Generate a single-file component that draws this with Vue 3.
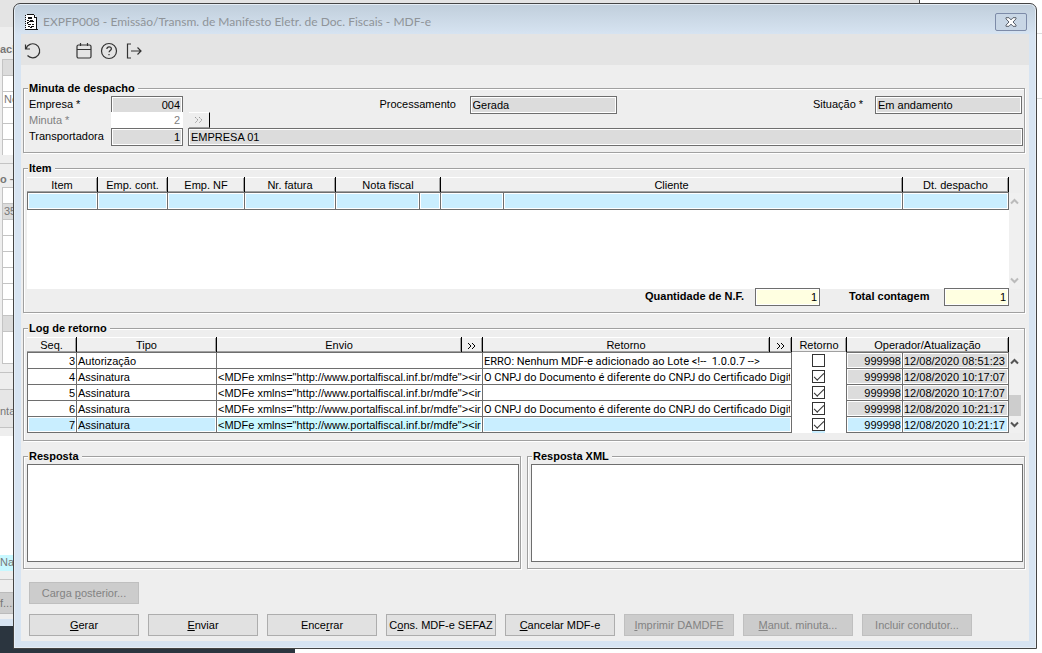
<template>
  <div class="desktop">
    <div class="back-window" aria-hidden="true">
      <div class="back-toolbar"></div>
      <div class="back-title">ach</div>
      <div v-for="(row, i) in backRows" :key="i" class="back-row" :class="row.type">{{ row.text }}</div>
    </div>
    <div class="taskbar"></div>
    <div class="side-lines" aria-hidden="true"></div>

    <section class="dialog" role="dialog" aria-labelledby="dialog-title">
      <header class="titlebar">
        <svg class="doc-icon" width="13" height="17" viewBox="0 0 13 17" shape-rendering="crispEdges">
          <path d="M1 1h8l3 3v12H1z" fill="#fff" />
          <path d="M0 1h1v1H0zM0 3h1v1H0zM0 5h1v1H0zM0 7h1v1H0zM0 9h1v1H0zM0 11h1v1H0zM0 13h1v1H0zM0 15h13v1H0zM11 4h1v12h-1zM2 0h7v1H2zM9 1h1v3H9zM10 3h2v1h-2z" fill="#111" />
          <path d="M3 3h4v2H3zM2 6h2v1H2zM5 6h3v1H5zM4 7h5v1H4zM2 8h2v1H2zM3 10h3v1H3zM7 10h2v1H7zM3 12h2v1H3zM6 12h3v1H6zM2 9h1v1H2zM5 13h2v1H5z" fill="#111" />
        </svg>
        <h1 id="dialog-title">EXPFP008 - Emissão/Transm. de Manifesto Eletr. de Doc. Fiscais - MDF-e</h1>
        <button type="button" class="close" aria-label="Fechar">
          <svg width="12" height="10" viewBox="0 0 12 10">
            <path d="M1 .7h3l2 2.2 2-2.2h3v1.2L8 5l3 3.1v1.2H8L6 7.1 4 9.3H1V8.1L4 5 1 1.9z" fill="#fff" stroke="#59606b" />
          </svg>
        </button>
      </header>

      <nav class="toolbar">
        <button type="button" class="tool undo" aria-label="Desfazer">
          <svg width="18" height="18" viewBox="0 0 18 18">
            <path d="M1.500 2.500v4.500h4.500M2 6.700A7 7 0 1 1 3.500 13.500" />
          </svg>
        </button>
        <button type="button" class="tool" aria-label="Calendário">
          <svg width="18" height="18" viewBox="0 0 18 18">
            <rect x="2" y="3" width="14" height="13" rx="1.5" />
            <path d="M2 7.5h14M5.5 1v3M12.5 1v3" />
          </svg>
        </button>
        <button type="button" class="tool" aria-label="Ajuda">
          <svg width="18" height="18" viewBox="0 0 18 18">
            <circle cx="9" cy="9" r="7.5" />
            <path d="M6.8 7c.2-1.5 1.1-2.2 2.3-2.2 1.3 0 2.3.8 2.3 2 0 1.7-2.3 1.8-2.3 3.5M9 12v1.3" />
          </svg>
        </button>
        <button type="button" class="tool" aria-label="Sair">
          <svg width="18" height="18" viewBox="0 0 18 18">
            <path d="M6 2H2.5v14H6M6 9h10M12.5 5.5L16 9l-3.5 3.5" />
          </svg>
        </button>
      </nav>

      <main class="content">
        <fieldset class="group">
          <legend>Minuta de despacho</legend>
          <div class="minuta">
            <div class="line spread">
              <div class="pair">
                <label for="empresa" class="lead">Empresa *</label>
                <input id="empresa" class="field short num" value="004" readonly />
              </div>
              <div class="pair">
                <label for="processamento" class="mid">Processamento</label>
                <input id="processamento" class="field medium" value="Gerada" readonly />
              </div>
              <div class="pair">
                <label for="situacao" class="end">Situação *</label>
                <input id="situacao" class="field medium" value="Em andamento" readonly />
              </div>
            </div>
            <div class="line muted">
              <label for="minuta" class="lead">Minuta *</label>
              <input id="minuta" class="plain short num" value="2" disabled />
              <button type="button" class="lookup" aria-label="Buscar minuta" disabled>
                <svg width="10" height="8" viewBox="0 0 10 8">
                  <path d="M1 1l3 3-3 3M5 1l3 3-3 3" stroke-dasharray="2 1" />
                </svg>
              </button>
            </div>
            <div class="line">
              <label for="transportadora" class="lead">Transportadora</label>
              <input id="transportadora" class="field short num" value="1" readonly />
              <input class="field wide" aria-label="Nome da transportadora" value="EMPRESA 01" readonly />
            </div>
          </div>
        </fieldset>

        <fieldset class="group">
          <legend>Item</legend>
          <div class="list items">
            <table>
              <colgroup>
                <col class="w71" /><col class="w70" /><col class="w77" /><col class="w91" />
                <col class="w84" /><col class="w21" /><col class="w63" /><col /><col class="w106" />
              </colgroup>
              <thead>
                <tr>
                  <th>Item</th>
                  <th>Emp. cont.</th>
                  <th>Emp. NF</th>
                  <th>Nr. fatura</th>
                  <th colspan="2">Nota fiscal</th>
                  <th colspan="2">Cliente</th>
                  <th>Dt. despacho</th>
                </tr>
              </thead>
              <tbody>
                <tr class="selected">
                  <td v-for="n in 9" :key="n"></td>
                </tr>
              </tbody>
            </table>
            <div class="scroll faded">
              <button type="button" aria-label="Rolar para cima">
                <svg width="9" height="7" viewBox="0 0 9 7"><path d="M1 5.5L4.5 2 8 5.5" /></svg>
              </button>
              <button type="button" aria-label="Rolar para baixo">
                <svg width="9" height="7" viewBox="0 0 9 7"><path d="M1 1.5L4.5 5 8 1.5" /></svg>
              </button>
            </div>
          </div>
          <div class="totals">
            <label for="qtd" class="first">Quantidade de N.F.</label>
            <input id="qtd" class="field total num" value="1" readonly />
            <label for="contagem" class="second">Total contagem</label>
            <input id="contagem" class="field total num" value="1" readonly />
          </div>
        </fieldset>

        <fieldset class="group">
          <legend>Log de retorno</legend>
          <div class="list log">
            <table>
              <colgroup>
                <col class="w50" /><col class="w140" /><col class="w245" /><col class="w21" />
                <col /><col class="w22" /><col class="w55" /><col class="w56" /><col class="w106" />
              </colgroup>
              <thead>
                <tr>
                  <th>Seq.</th>
                  <th>Tipo</th>
                  <th>Envio</th>
                  <th>
                    <button type="button" class="expand" aria-label="Ver envio">
                      <svg width="10" height="8" viewBox="0 0 10 8"><path d="M1 1l3 3-3 3M5 1l3 3-3 3" /></svg>
                    </button>
                  </th>
                  <th>Retorno</th>
                  <th>
                    <button type="button" class="expand" aria-label="Ver retorno">
                      <svg width="10" height="8" viewBox="0 0 10 8"><path d="M1 1l3 3-3 3M5 1l3 3-3 3" /></svg>
                    </button>
                  </th>
                  <th>Retorno</th>
                  <th colspan="2">Operador/Atualização</th>
                </tr>
              </thead>
              <tbody>
                <tr v-for="row in logs" :key="row.seq" :class="{ selected: row.seq === 7 }">
                  <td class="num">{{ row.seq }}</td>
                  <td>{{ row.tipo }}</td>
                  <td colspan="2" class="envio"><div class="clip">{{ row.envio }}</div></td>
                  <td colspan="2" class="retorno"><div class="clip">{{ row.retorno }}</div></td>
                  <td class="check">
                    <input v-model="row.ok" type="checkbox" :aria-label="'Retorno ' + row.seq" />
                  </td>
                  <td class="num locked">999998</td>
                  <td class="locked">{{ row.data }}</td>
                </tr>
              </tbody>
            </table>
            <div class="scroll">
              <button type="button" aria-label="Rolar para cima">
                <svg width="9" height="7" viewBox="0 0 9 7"><path d="M1 5.5L4.5 2 8 5.5" /></svg>
              </button>
              <div class="thumb"></div>
              <button type="button" aria-label="Rolar para baixo">
                <svg width="9" height="7" viewBox="0 0 9 7"><path d="M1 1.5L4.5 5 8 1.5" /></svg>
              </button>
            </div>
          </div>
        </fieldset>

        <div class="responses">
          <fieldset class="group">
            <legend id="resp">Resposta</legend>
            <div class="response"><textarea aria-labelledby="resp"></textarea></div>
          </fieldset>
          <fieldset class="group">
            <legend id="resp-xml">Resposta XML</legend>
            <div class="response"><textarea aria-labelledby="resp-xml"></textarea></div>
          </fieldset>
        </div>

        <footer class="actions">
          <div class="action-row">
            <button type="button" class="action" disabled>Carga <u>p</u>osterior...</button>
          </div>
          <div class="action-row">
            <button v-for="a in actions" :key="a.key + a.after" type="button" class="action" :disabled="a.disabled">{{ a.before }}<u>{{ a.key }}</u>{{ a.after }}</button>
          </div>
        </footer>
      </main>
    </section>
  </div>
</template>

<script setup>
import { ref } from 'vue'

const xml = '<MDFe xmlns="http://www.portalfiscal.inf.br/mdfe"><ir'
const cnpj = 'O CNPJ do Documento é diferente do CNPJ do Certificado Digita'

const logs = ref([
  { seq: 3, tipo: 'Autorização', envio: '', retorno: 'ERRO: Nenhum MDF-e adicionado ao Lote <!--\u00a0 1.0.0.7 -->', ok: false, data: '12/08/2020 08:51:23' },
  { seq: 4, tipo: 'Assinatura', envio: xml, retorno: cnpj, ok: true, data: '12/08/2020 10:17:07' },
  { seq: 5, tipo: 'Assinatura', envio: xml, retorno: '', ok: true, data: '12/08/2020 10:17:07' },
  { seq: 6, tipo: 'Assinatura', envio: xml, retorno: cnpj, ok: true, data: '12/08/2020 10:21:17' },
  { seq: 7, tipo: 'Assinatura', envio: xml, retorno: '', ok: true, data: '12/08/2020 10:21:17' }
])

const actions = [
  { before: '', key: 'G', after: 'erar' },
  { before: '', key: 'E', after: 'nviar' },
  { before: 'Ence', key: 'r', after: 'rar' },
  { before: 'C', key: 'o', after: 'ns. MDF-e SEFAZ' },
  { before: '', key: 'C', after: 'ancelar MDF-e' },
  { before: '', key: 'I', after: 'mprimir DAMDFE', disabled: true },
  { before: '', key: 'M', after: 'anut. minuta...', disabled: true },
  { before: 'Incluir condutor...', key: '', after: '', disabled: true }
]

const backRows = [
  { type: 'cell gray' },
  { type: 'cell' },
  { type: 'cell', text: 'Ne' },
  { type: 'cell' },
  { type: 'cell' },
  { type: 'cell' },
  { type: 'rule' },
  { type: 'caption', text: 'o –' },
  { type: 'cell' },
  { type: 'cell gray', text: '35' },
  { type: 'cell' },
  { type: 'cell' },
  { type: 'cell' },
  { type: 'cell' },
  { type: 'cell' },
  { type: 'cell' },
  { type: 'cell gray' },
  { type: 'cell tall' },
  { type: 'rule' },
  { type: 'tab', text: 'nta' },
  { type: 'rule' },
  { type: 'area' },
  { type: 'active', text: 'Na' },
  { type: 'rule' },
  { type: 'push', text: 'f....' }
]
</script>

<style>
body {
  margin: 0;
}
</style>

<style scoped>
.desktop {
  position: relative;
  height: 100vh;
  overflow: hidden;
  background: #fff;
  color: #000;
  font: 11px/15px "Liberation Sans", Arial, sans-serif;
}

.desktop * {
  box-sizing: border-box;
}

button,
input,
textarea {
  margin: 0;
  padding: 0;
  font: inherit;
  color: inherit;
}

svg {
  display: block;
  fill: none;
  stroke: #333;
}

/* window left open behind the dialog */
.back-window {
  position: absolute;
  top: 0;
  left: 0;
  width: 920px;
  height: 626px;
  overflow: hidden;
  background: #eee;
  border-right: 1px solid #444;
  border-bottom: 7px solid #d7e4f2;
  color: #777;
}

.back-toolbar {
  height: 27px;
  background: #e4e4e4;
}

.back-title {
  height: 32px;
  padding-top: 15px;
  font-weight: bold;
}

.back-row {
  height: 16px;
}

.cell {
  margin-left: 2px;
  padding-left: 1px;
  background: #fff;
  border: 1px solid #c4c4c4;
  border-bottom: 0;
}

.gray {
  background: #dcdcdc;
}

.tall {
  height: 33px;
  border-bottom: 1px solid #c4c4c4;
}

.rule {
  border-top: 1px solid #c4c4c4;
  margin-top: 8px;
  height: 9px;
}

.caption {
  font-weight: bold;
  margin-bottom: -1px;
}

.tab {
  height: 38px;
  margin-top: 8px;
  padding-top: 14px;
  background: #e6e6e6;
  border-top: 1px solid #c4c4c4;
}

.tab + .rule {
  margin-top: 0;
}

.area {
  height: 119px;
  background: #fff;
}

.active {
  background: #c8f8ff;
}

.push {
  height: 22px;
  margin-top: 4px;
  padding-top: 3px;
  background: #ccc;
  border: 1px solid #bbb;
  border-left: 0;
}

.taskbar {
  position: absolute;
  left: 0;
  bottom: 0;
  width: 295px;
  height: 27px;
  background: #2b353f;
}

.side-lines {
  position: absolute;
  top: 33px;
  right: 0;
  width: 5px;
  height: 66px;
  border: 1px solid #ddd;
  border-width: 1px 0;
}

.dialog {
  position: absolute;
  inset: 3px 5px 4px 13px;
  display: flex;
  flex-direction: column;
  padding: 0 7px 7px;
  background: linear-gradient(#c0cedb, #d7e4f2 31px);
  border: 1px solid #444;
  border-radius: 7px 7px 0 0;
  box-shadow: inset 0 0 0 1px #e6eef6;
}

.titlebar {
  display: flex;
  flex: none;
  align-items: center;
  height: 30px;
  padding: 6px 2px 0 4px;
}

.doc-icon {
  margin-right: 5px;
  stroke: none;
}

h1 {
  flex: 1;
  margin: 0;
  color: #8f9499;
  font: 12px/16px Lato, sans-serif;
}

.close {
  display: flex;
  align-items: center;
  justify-content: center;
  width: 32px;
  height: 18px;
  background: #c8d6e5;
  border: 1px solid #7d8ba8;
  border-radius: 2px;
}

.toolbar {
  display: flex;
  flex: none;
  align-items: center;
  gap: 7px;
  height: 31px;
  padding: 3px 3px 0;
  background: #e4e4e4;
}

.tool {
  background: none;
  border: 0;
}

.undo {
  margin-right: 26px;
}

.tool svg {
  stroke-width: 1.2;
}

.content {
  flex: 1;
  padding: 16px 4px 5px 2px;
  background: #eee;
}

.group {
  min-width: 0;
  margin: 0 0 8px;
  padding: 0;
  border: 1px solid #a0a0a0;
  box-shadow: 1px 1px 0 #fff, inset 1px 1px 0 #fff;
}

legend {
  margin-left: 4px;
  padding: 0 3px 0 1px;
  background: #eee;
  font-weight: bold;
}

.minuta {
  padding: 0 1px 8px 5px;
}

.line {
  display: flex;
  align-items: flex-start;
  height: 16px;
}

.spread {
  justify-content: space-between;
  padding-right: 1px;
}

.pair {
  display: flex;
}

.line label {
  flex: none;
  line-height: 16px;
}

.lead {
  width: 82px;
}

.mid {
  width: 90px;
}

.end {
  width: 62px;
}

.muted {
  color: #808080;
}

.field {
  height: 18px;
  padding: 0 2px;
  background: #dcdcdc;
  border: 1px solid #6e6e6e;
  border-radius: 0;
  box-shadow: inset 0 0 0 1px #fff;
}

.plain {
  position: relative;
  height: 16px;
  padding: 0 3px;
  background: #fff;
  border: 0;
}

.short {
  width: 72px;
}

.medium {
  width: 147px;
}

.wide {
  flex: 1;
  margin-left: 5px;
}

.num {
  text-align: right;
}

.lookup {
  display: flex;
  align-items: center;
  justify-content: center;
  width: 21px;
  height: 16px;
  margin-left: 6px;
  background: #eee;
  border: solid;
  border-width: 1px 1px 1px 0;
  border-color: #fff #000 #a0a0a0 #fff;
}

.lookup svg {
  stroke: #999;
}

.list {
  display: flex;
  padding: 1px 2px 0 3px;
}

.items {
  height: 113px;
  background: linear-gradient(#fff, #fff) 3px 16px / calc(100% - 18px) 97px no-repeat;
}

.log {
  padding-bottom: 7px;
}

table {
  flex: 1;
  width: 100%;
  align-self: flex-start;
  table-layout: fixed;
  border-spacing: 0;
}

.w21 { width: 21px; }
.w22 { width: 22px; }
.w50 { width: 50px; }
.w55 { width: 55px; }
.w56 { width: 56px; }
.w63 { width: 63px; }
.w70 { width: 70px; }
.w71 { width: 71px; }
.w77 { width: 77px; }
.w84 { width: 84px; }
.w91 { width: 91px; }
.w106 { width: 106px; }
.w140 { width: 140px; }
.w245 { width: 245px; }

th {
  height: 15px;
  padding: 2px 0 0;
  background: #efefef;
  border-right: 1px solid #000;
  box-shadow: inset 0 1px 0 #fff, inset -1px -1px 0 #a0a0a0;
  font-weight: normal;
  line-height: 13px;
}

.expand {
  display: block;
  margin: 0 auto;
  background: none;
  border: 0;
}

.expand svg {
  stroke: #000;
}

td {
  height: 16px;
  padding: 2px 1px 0;
  overflow: hidden;
  background: #fff;
  border-top: 1px solid #6e6e6e;
  border-right: 1px solid #6e6e6e;
  box-shadow: inset 0 0 0 1px #fff;
  line-height: 13px;
  white-space: nowrap;
  vertical-align: top;
}

td:first-child {
  border-left: 1px solid #6e6e6e;
}

tr:last-child td {
  height: 17px;
  border-bottom: 1px solid #6e6e6e;
}

.items tr:last-child td {
  height: 18px;
}

.clip {
  overflow: hidden;
}

.retorno {
  font-family: Roboto, sans-serif;
}

.locked {
  background: #dcdcdc;
}

.selected td {
  background: #c9eeff;
}

.selected .envio {
  background: #c8f8ff;
}

.log tr .check {
  padding: 2px 1px 0 0;
  background: #fff;
  border-top: 0;
  border-bottom: 0;
}

.check input {
  display: block;
  position: relative;
  width: 13px;
  height: 13px;
  margin: 0 auto;
  appearance: none;
  background: #fff;
  border: 1px solid #333;
}

.selected .check input {
  box-shadow: 0 2px 0 #c9eeff;
}

.check input:checked::after {
  content: "";
  position: absolute;
  top: 2px;
  left: 1px;
  width: 9px;
  height: 4px;
  border: solid #333;
  border-width: 0 0 1px 1px;
  transform: rotate(-45deg);
}

.scroll {
  display: flex;
  flex: none;
  flex-direction: column;
  justify-content: space-between;
  width: 13px;
  margin-top: 16px;
  background: #f0f0f0;
}

.scroll button {
  display: flex;
  align-items: center;
  justify-content: center;
  width: 11px;
  height: 17px;
  background: none;
  border: 0;
}

.scroll svg {
  stroke: #555;
  stroke-width: 2;
}

.faded svg {
  stroke: #bbb;
}

.thumb {
  width: 12px;
  height: 21px;
  margin-top: auto;
  background: #cdcdcd;
}

.totals {
  display: flex;
  justify-content: flex-end;
  margin-top: -1px;
  padding: 0 15px 6px 0;
  font-weight: bold;
}

.totals label {
  line-height: 16px;
}

.first {
  width: 110px;
}

.second {
  width: 95px;
  margin-left: 29px;
}

.total {
  width: 65px;
  background: #ffffe1;
  font-weight: normal;
}

.responses {
  display: flex;
  gap: 6px;
}

.responses .group {
  flex: 1;
  margin: 0;
}

.response {
  padding: 0 1px 6px 3px;
}

textarea {
  display: block;
  width: 100%;
  height: 98px;
  background: #fff;
  border: 1px solid #6e6e6e;
  border-radius: 0;
  resize: none;
}

.actions {
  display: flex;
  flex-direction: column;
  gap: 10px;
  padding: 13px 6px 0;
}

.action-row {
  display: flex;
  gap: 9px;
}

.action {
  width: 110px;
  height: 22px;
  background: #e1e1e1;
  border: 1px solid #adadad;
  white-space: nowrap;
}

.action:disabled {
  color: #838383;
  background: #ccc;
  border-color: #bfbfbf;
}
</style>
